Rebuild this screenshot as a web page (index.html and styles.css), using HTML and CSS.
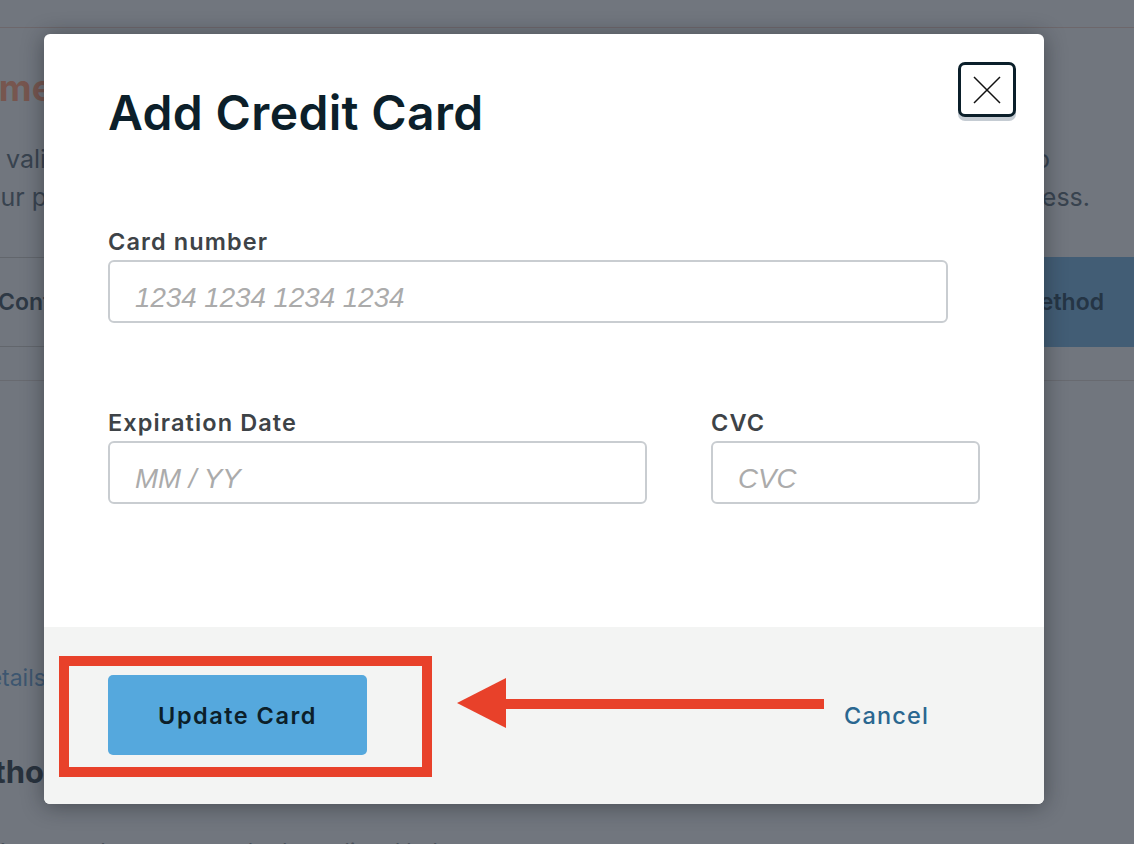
FILE: index.html
```html
<!DOCTYPE html>
<html lang="en">
<head>
<meta charset="utf-8">
<title>Add Credit Card</title>
<link rel="stylesheet" href="styles.css">
</head>
<body>
<div class="page">
  <div class="topbar"></div>
  <h1 class="page-title">Payment Methods</h1>
  <div class="intro">
    <div class="intro-line l1"><span>Add a valid</span><span>payment method to</span></div>
    <div class="intro-line l2"><span>for your purchases</span><span>to complete the process.</span></div>
  </div>
  <div class="tabs">
    <span class="tab">Contact Info</span>
    <span class="tab-action">Add Payment Method</span>
  </div>
  <div class="rule"></div>
  <a class="details-link">Card details</a>
  <h2 class="section-title">Methods</h2>
  <p class="section-text">Your saved payment methods are listed below.</p>
</div>

<div class="modal" role="dialog" aria-label="Add Credit Card">
  <div class="modal-body">
    <div class="modal-header">
      <h2 class="modal-title">Add Credit Card</h2>
      <button class="close-btn" aria-label="Close">
        <svg width="28" height="28" viewBox="0 0 28 28"><path d="M1 1 L27 27 M27 1 L1 27" stroke="#111" stroke-width="1.5" fill="none"/></svg>
      </button>
    </div>
    <div class="form">
      <div class="field">
        <label class="field-label">Card number</label>
        <input class="field-input" type="text" placeholder="1234 1234 1234 1234">
      </div>
      <div class="field-row">
        <div class="field">
          <label class="field-label">Expiration Date</label>
          <input class="field-input" type="text" placeholder="MM / YY">
        </div>
        <div class="field">
          <label class="field-label">CVC</label>
          <input class="field-input" type="text" placeholder="CVC">
        </div>
      </div>
    </div>
  </div>
  <div class="modal-footer">
    <button class="primary-btn">Update Card</button>
    <a class="cancel-link">Cancel</a>
  </div>
</div>

<div class="highlight-box"></div>
<svg class="annotation-arrow" width="374" height="50" viewBox="0 0 374 50">
  <polygon points="7,25 56,0 56,50" fill="#e8412a"/>
  <rect x="55" y="21" width="319" height="10" fill="#e8412a"/>
</svg>
</body>
</html>
```

FILE: styles.css
```css
* { box-sizing: border-box; }

html, body {
  margin: 0;
  height: 844px;
  overflow: hidden;
}

body {
  background: #71767e;
  font-family: Inter, "Noto Sans", sans-serif;
  position: relative;
}

/* ---------- background page ---------- */
.page {
  width: 1134px;
}

.topbar {
  height: 28px;
  border-bottom: 1px solid #6d676b;
}

.page-title {
  margin: 38px 0 0 -66px;
  font-size: 36px;
  line-height: 44px;
  font-weight: 700;
  color: #77564f;
}

.intro {
  margin-top: 30px;
  font-size: 25px;
  line-height: 38px;
  color: #38434f;
}

.intro-line {
  display: flex;
  justify-content: space-between;
}

.intro-line.l1 { margin-left: -70px; padding-right: 84px; }
.intro-line.l2 { margin-left: -68px; padding-right: 44px; }

.tabs {
  margin-top: 41px;
  height: 90px;
  border-top: 1px solid #62666c;
  border-bottom: 1px solid #62666c;
  display: flex;
  align-items: stretch;
  justify-content: space-between;
}

.tab {
  display: flex;
  align-items: center;
  margin-left: -2px;
  font-size: 23px;
  font-weight: 600;
  color: #2e3945;
}

.tab-action {
  display: flex;
  align-items: center;
  padding: 0 30px;
  margin-top: -1px;
  margin-bottom: -1px;
  background: #425d75;
  font-size: 23px;
  font-weight: 600;
  color: #253545;
}

.rule {
  margin-top: 33px;
  border-top: 1px solid #686a70;
}

.details-link {
  display: block;
  margin: 282px 0 0 -84px;
  font-size: 23px;
  line-height: 30px;
  color: #3d5670;
}

.section-title {
  margin: 61px 0 0 -53px;
  font-size: 31px;
  line-height: 36px;
  font-weight: 700;
  color: #28323d;
}

.section-text {
  margin: 48px 0 0 -10px;
  font-size: 22px;
  color: #4a525b;
}

/* ---------- modal ---------- */
.modal {
  position: absolute;
  left: 44px;
  top: 34px;
  width: 1000px;
  height: 770px;
  background: #fff;
  border-radius: 6px;
  box-shadow: 0 2px 22px rgba(20, 24, 30, 0.45);
  overflow: hidden;
  display: flex;
  flex-direction: column;
}

.modal-body {
  flex: 1;
}

.modal-header {
  display: flex;
  justify-content: space-between;
  align-items: flex-start;
  padding: 28px 28px 0 64px;
}

.modal-title {
  margin: 23px 0 0;
  font-size: 48px;
  line-height: 56px;
  font-weight: 600;
  letter-spacing: 0.35px;
  color: #0c1f2a;
}

.close-btn {
  width: 58px;
  height: 55px;
  padding: 0;
  border: 3px solid #0b1f2a;
  border-radius: 7px;
  background: #fff;
  box-shadow: 0 4px 0 #c5ccd3;
  display: flex;
  align-items: center;
  justify-content: center;
}

.close-btn svg { display: block; }

.form {
  padding: 0 64px;
}

.field {
  display: flex;
  flex-direction: column;
}

.form > .field {
  width: 840px;
  margin-top: 87px;
}

.field-row {
  display: grid;
  grid-template-columns: 539px 269px;
  column-gap: 64px;
  margin-top: 86px;
}

.field-label {
  font-size: 23.5px;
  line-height: 28px;
  font-weight: 600;
  letter-spacing: 1.1px;
  color: #3e4347;
}

.field-input {
  margin-top: 4px;
  height: 63px;
  width: 100%;
  border: 2px solid #c9cdd1;
  border-radius: 6px;
  padding: 12px 25px 0;
  font-family: "Liberation Sans", Arial, sans-serif;
  font-style: italic;
  font-size: 27.7px;
  color: #333;
  background: #fff;
  outline: none;
}

.field-input::placeholder {
  color: #ababab;
  font-style: italic;
}

.modal-footer {
  height: 177px;
  flex: none;
  background: #f3f4f3;
  padding: 48px 64px 0;
  display: flex;
  align-items: flex-start;
}

.primary-btn {
  width: 259px;
  height: 80px;
  border: none;
  border-radius: 5px;
  background: #55a8dd;
  font-family: Inter, "Noto Sans", sans-serif;
  font-size: 23.5px;
  font-weight: 600;
  letter-spacing: 1.5px;
  color: #0c1f2a;
}

.cancel-link {
  margin-left: 477px;
  line-height: 82px;
  font-size: 23.5px;
  font-weight: 500;
  letter-spacing: 1.2px;
  color: #2a6790;
}

/* ---------- annotation ---------- */
.highlight-box {
  position: absolute;
  left: 59px;
  top: 656px;
  width: 373px;
  height: 121px;
  border: 10px solid #e8412a;
}

.annotation-arrow {
  position: absolute;
  left: 450px;
  top: 678px;
}
```
